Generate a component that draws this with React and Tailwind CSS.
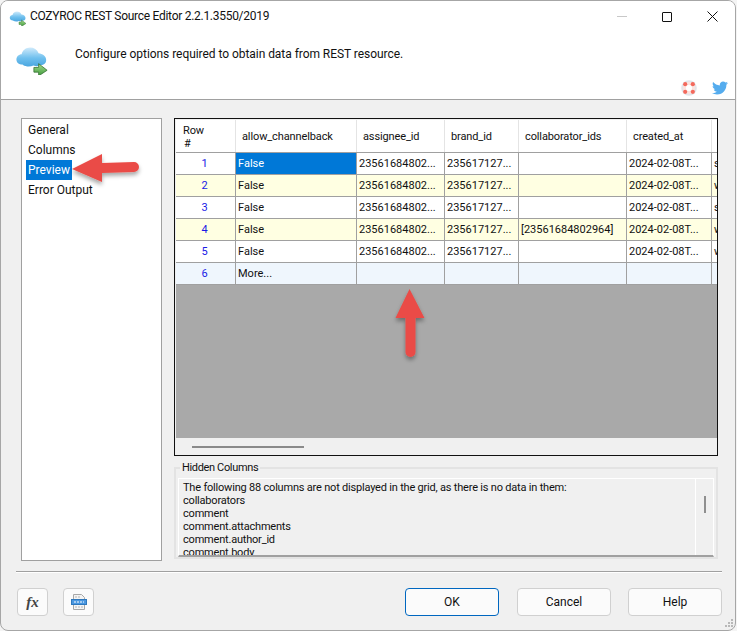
import React from "react";
import { FaTwitter } from "react-icons/fa";

const COLS = [
  { name: "allow_channelback", w: "w-[121px]" },
  { name: "assignee_id", w: "w-[88px]" },
  { name: "brand_id", w: "w-[74px]" },
  { name: "collaborator_ids", w: "w-[108px]" },
  { name: "created_at", w: "w-[85px]" },
  { name: "", w: "w-[60px]" },
];

const ROWS = [
  ["False", "23561684802...", "235617127...", "", "2024-02-08T...", "system"],
  ["False", "23561684802...", "235617127...", "", "2024-02-08T...", "web"],
  ["False", "23561684802...", "235617127...", "", "2024-02-08T...", "system"],
  ["False", "23561684802...", "235617127...", "[23561684802964]", "2024-02-08T...", "web"],
  ["False", "23561684802...", "235617127...", "", "2024-02-08T...", "web"],
  ["More...", "", "", "", "", ""],
];

const HIDDEN = [
  "The following 88 columns are not displayed in the grid, as there is no data in them:",
  "collaborators",
  "comment",
  "comment.attachments",
  "comment.author_id",
  "comment.body",
];

const CloudIcon = ({ size }) => (
  <svg width={size} height={size} viewBox="0 0 36 36">
    <defs>
      <linearGradient id={`cl${size}`} x1="0" y1="0" x2="0" y2="1">
        <stop offset="0" stopColor="#cfeafb" />
        <stop offset="0.55" stopColor="#6fc0ee" />
        <stop offset="1" stopColor="#4aa6e0" />
      </linearGradient>
      <linearGradient id={`ar${size}`} x1="0" y1="0" x2="0" y2="1">
        <stop offset="0" stopColor="#a5dc8c" />
        <stop offset="1" stopColor="#3f9a3c" />
      </linearGradient>
    </defs>
    <path
      d="M8 25c-4 0-6.500-2.500-6.500-5.500 0-3 2.500-5.500 5.500-5.500 1-4 4.500-7 9-7 4 0 7.500 2 9 6 4 .5 8 3 8 7 0 3.500-2.500 5-5.500 5.500-3 1.500-5 1.500-8 .5-3 1.500-8 1.500-11-.500z"
      fill={`url(#cl${size})`}
    />
    <path d="M20 28h5v-4l9 7-9 6v-4h-5z" fill={`url(#ar${size})`} stroke="#2f6b2c" strokeWidth="0.8" />
  </svg>
);

const Lifebuoy = () => (
  <svg width="16" height="16" viewBox="0 0 16 16">
    <circle cx="8" cy="8" r="7.800" fill="#e2e5ea" />
    <circle cx="8" cy="8" r="6" fill="#fbe3df" />
    <g fill="#f4695c">
      <circle cx="4.200" cy="4.200" r="2.100" />
      <circle cx="11.800" cy="4.200" r="2.100" />
      <circle cx="4.200" cy="11.800" r="2.100" />
      <circle cx="11.800" cy="11.800" r="2.100" />
    </g>
    <circle cx="8" cy="8" r="3" fill="#ffffff" />
  </svg>
);

const FileIcon = () => (
  <svg width="16" height="16" viewBox="0 0 16 16">
    <path d="M2.500 .5h8l3 3v12h-11z" fill="#f4f4f4" stroke="#a8a8a8" />
    <path d="M4 3h5M4 13h8" stroke="#b5b5b5" strokeDasharray="2 1" />
    <rect x="0.500" y="5.500" width="15" height="5" fill="#4a97e0" stroke="#2f78bd" />
    <path d="M3 8h10" stroke="#ffffff" strokeDasharray="2 1" />
  </svg>
);

const IconBtn = ({ children }) => (
  <button className="w-[31px] h-[28px] flex items-center justify-center bg-[#fbfbfb] border border-[#d0d0d0] rounded-[4px]">
    {children}
  </button>
);

const Btn = ({ label, primary, cls }) => (
  <button
    className={`w-[94px] h-[28px] bg-[#fbfbfb] rounded-[4px] text-[12px] text-[#111] ${cls} ${
      primary ? "border border-[#0067c0]" : "border border-[#d0d0d0]"
    }`}
  >
    {label}
  </button>
);

const App = () => {
  return (
    <div className="relative w-[737px] h-[631px] overflow-hidden bg-[#f4f4f4] text-[11px] leading-[13px] text-[#111] font-['Roboto','Open_Sans',sans-serif]">
      <div className="w-[736px] h-[631px] flex flex-col bg-[#f0f0f0] border border-[#a6a6a6] rounded-[8px] overflow-hidden">
        {/* title + banner */}
        <div className="h-[99px] shrink-0 flex flex-col bg-white border-b border-[#a0a0a0] text-[12px]">
          <div className="h-[31px] shrink-0 flex items-center pl-[8px]">
            <CloudIcon size={18} />
            <span className="ml-[3px] tracking-[-0.28px]">COZYROC REST Source Editor 2.2.1.3550/2019</span>
            <div className="ml-auto flex items-center">
              <div className="w-[10px] h-px bg-[#c8c8c8] mr-[35px]" />
              <div className="w-[10px] h-[10px] border border-[#111] rounded-[1px] mr-[35px]" />
              <svg width="11" height="11" viewBox="0 0 11 11" className="mr-[17px]">
                <path d="M.5.500l10 10M10.500.500l-10 10" stroke="#111" strokeWidth="1" />
              </svg>
            </div>
          </div>
          <div className="flex-1 flex pl-[14px] relative">
            <div className="mt-[9px]">
              <CloudIcon size={34} />
            </div>
            <div className="ml-[26px] mt-[16px] tracking-[-0.05px]">
              Configure options required to obtain data from REST resource.
            </div>
            <div className="absolute right-[7px] bottom-[3px] flex items-center gap-[15px]">
              <Lifebuoy />
              <FaTwitter className="text-[#55acee] text-[16px]" />
            </div>
          </div>
        </div>

        {/* body */}
        <div className="flex-1 flex flex-col pl-[15px] pr-[13px]">
          <div className="flex mt-[18px] ml-[5px] mr-[4px] h-[443px]">
            <div className="w-[141px] border border-[#a0a0a0] bg-white flex flex-col pt-[1px] pl-[4px] text-[12px]">
              {["General", "Columns", "Preview", "Error Output"].map((t) => (
                <div
                  key={t}
                  className={`h-[20px] flex items-center px-[2px] w-fit ${
                    t === "Preview" ? "bg-[#0078d7] text-white" : ""
                  }`}
                >
                  {t}
                </div>
              ))}
            </div>

            <div className="ml-[12px] w-[544px] flex flex-col">
              {/* grid */}
              <div className="h-[338px] border border-[#111] pl-[1px] pt-[1px] bg-[#f0f0f0] flex flex-col overflow-hidden">
                <div className="h-[33px] flex shrink-0 bg-white border-b border-[#a0a0a0] tracking-[-0.12px]">
                  <div className="w-[60px] shrink-0 border-r border-[#e4e4e4] flex flex-col pl-[7px] pt-[4px]">
                    <span>Row</span>
                    <span className="pl-[1px]">#</span>
                  </div>
                  {COLS.map((c) => (
                    <div
                      key={c.name || "rest"}
                      className={`${c.w} shrink-0 border-r border-[#e4e4e4] flex items-center pl-[6px]`}
                    >
                      {c.name}
                    </div>
                  ))}
                </div>
                {ROWS.map((row, i) => (
                  <div
                    key={i}
                    className={`h-[22px] flex shrink-0 border-b border-[#a0a0a0] ${
                      i === 5 ? "bg-[#eff6fd]" : i % 2 === 1 ? "bg-[#ffffe2]" : "bg-white"
                    }`}
                  >
                    <div className="w-[60px] shrink-0 border-r border-[#a0a0a0] flex items-center justify-center pr-[2px] text-[#1a1ae6]">
                      {i + 1}
                    </div>
                    {row.map((v, j) => (
                      <div
                        key={j}
                        className={`${COLS[j].w} shrink-0 overflow-hidden whitespace-nowrap border-r border-[#a0a0a0] flex items-center pl-[2px] ${
                          i === 0 && j === 0 ? "bg-[#0078d7] text-white" : ""
                        }`}
                      >
                        {v}
                      </div>
                    ))}
                  </div>
                ))}
                <div className="flex-1 bg-[#a9a9a9]" />
                <div className="h-[17px] shrink-0 flex items-center pl-[16px]">
                  <div className="w-[112px] h-[2px] bg-[#8a8a8a]" />
                </div>
              </div>

              {/* hidden columns */}
              <div className="relative mt-[11px] h-[92px] border-2 border-[#e3e3e3] px-[2px] pt-[9px]">
                <span className="absolute left-[4px] -top-[8px] bg-[#f0f0f0] px-[2px] tracking-[-0.35px]">
                  Hidden Columns
                </span>
                <div className="h-[79px] flex border-t border-x border-white border-b-2 border-b-[#a0a0a0] overflow-hidden">
                  <div className="flex-1 pl-[4px] pt-[2px] overflow-hidden whitespace-nowrap tracking-[-0.2px]">
                    {HIDDEN.map((t) => (
                      <div key={t}>{t}</div>
                    ))}
                  </div>
                  <div className="w-[18px] shrink-0 border-l border-white flex justify-center pt-[17px]">
                    <div className="w-[2px] h-[17px] bg-[#8f8f8f]" />
                  </div>
                </div>
              </div>
            </div>
          </div>

          {/* footer */}
          <div className="mt-[10px] h-[2px] bg-[#a0a0a0] border-b border-white" />
          <div className="flex mt-[15px] pl-[1px]">
            <IconBtn>
              <span className="font-['Liberation_Serif',serif] italic font-bold text-[15px] text-[#444]">fx</span>
            </IconBtn>
            <div className="ml-[15px]">
              <IconBtn>
                <FileIcon />
              </IconBtn>
            </div>
            <Btn label="OK" primary cls="ml-auto" />
            <Btn label="Cancel" cls="ml-[18px]" />
            <Btn label="Help" cls="ml-[17px]" />
          </div>
        </div>
      </div>

      {/* red annotation arrows */}
      <svg width="737" height="631" className="absolute inset-0 pointer-events-none">
        <defs>
          <filter id="sh" x="-20%" y="-20%" width="140%" height="140%">
            <feDropShadow dx="0" dy="3" stdDeviation="2" floodColor="#000" floodOpacity="0.35" />
          </filter>
        </defs>
        <g fill="#ea4c46" filter="url(#sh)">
          <path d="M72 169l30-15v9l32-1a5 5 0 0 1 0 10l-32 1v9z" />
          <path d="M409.500 289l15 29h-9v34a5 5 0 0 1-10 0v-34h-10z" />
        </g>
      </svg>

      {/* resize grip */}
      <svg width="10" height="10" className="absolute right-[3px] bottom-[3px]" viewBox="0 0 10 10" fill="#b8b8b8">
        <rect x="7" y="1" width="2" height="2" />
        <rect x="4" y="4" width="2" height="2" />
        <rect x="7" y="4" width="2" height="2" />
        <rect x="1" y="7" width="2" height="2" />
        <rect x="4" y="7" width="2" height="2" />
        <rect x="7" y="7" width="2" height="2" />
      </svg>
    </div>
  );
};

export default App;
